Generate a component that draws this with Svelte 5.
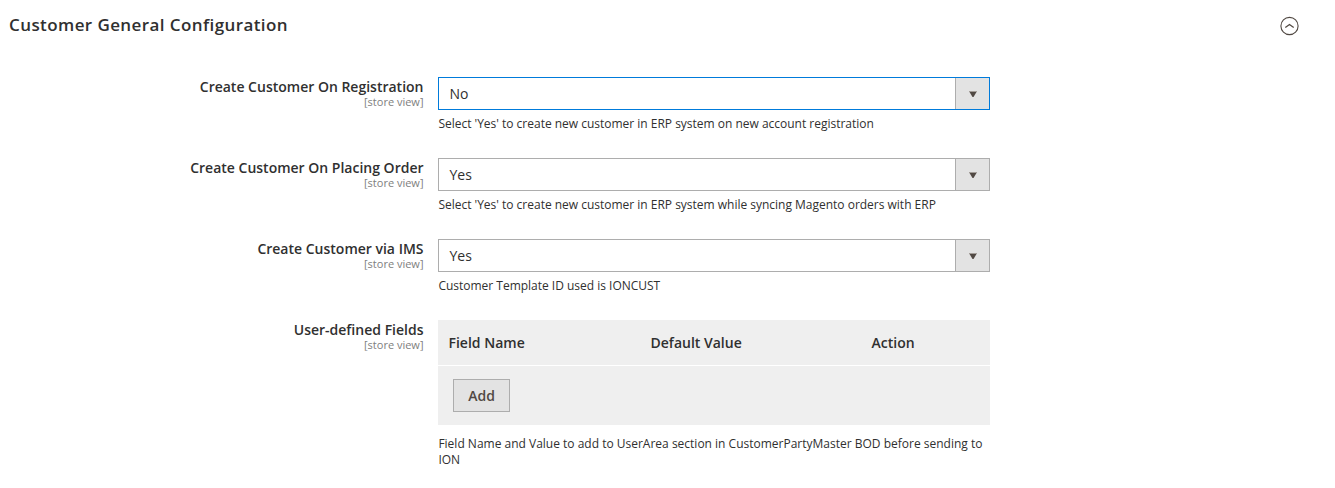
<script>
  const fields = [
    { label: 'Create Customer On Registration', value: 'No', note: "Select 'Yes' to create new customer in ERP system on new account registration", active: true },
    { label: 'Create Customer On Placing Order', value: 'Yes', note: "Select 'Yes' to create new customer in ERP system while syncing Magento orders with ERP" },
    { label: 'Create Customer via IMS', value: 'Yes', note: 'Customer Template ID used is IONCUST' }
  ];
</script>

<main>
  <header>
    <h1>Customer General Configuration</h1>
    <svg width="20" height="20" viewBox="0 0 20 20" fill="none" stroke="#514943">
      <circle cx="9.5" cy="10" r="8.6" stroke-width="1.1" />
      <path d="M5.3 11.6 9.5 8.4l4.2 3.2" stroke-width="1.2" />
    </svg>
  </header>
  {#each fields as f}
    <div class="row">
      <div class="label"><b>{f.label}</b><span>[store view]</span></div>
      <div class="control">
        <div class="select" class:active={f.active}>
          <span>{f.value}</span>
          <i><svg width="8" height="6" viewBox="0 0 8 6"><path d="M0 0h8v1H0z" fill="#a39d98" /><path d="M.5 1h7L4.5 6h-1z" fill="#514943" /></svg></i>
        </div>
        <p>{f.note}</p>
      </div>
    </div>
  {/each}
  <div class="row">
    <div class="label"><b>User-defined Fields</b><span>[store view]</span></div>
    <div class="control">
      <div class="table">
        <div class="head"><b>Field Name</b><b>Default Value</b><b>Action</b></div>
        <div class="foot"><button>Add</button></div>
      </div>
      <p>Field Name and Value to add to UserArea section in CustomerPartyMaster BOD before sending to ION</p>
    </div>
  </div>
</main>

<style>
  :global(body) { margin: 0; background: #fff; }
  main { height: 488px; overflow: hidden; font-family: "Open Sans", sans-serif; color: #303030; }
  header { display: flex; justify-content: space-between; padding: 13px 35px 0 9px; height: 64px; box-sizing: border-box; }
  h1 { margin: 0; font-size: 17px; line-height: 24px; font-weight: 600; letter-spacing: .41px; }
  header svg { margin-top: 3px; }
  .row { display: flex; padding-top: 13px; height: 81px; box-sizing: border-box; }
  .label { width: 423.5px; margin-right: 14.5px; text-align: right; flex: none; }
  .label b { display: block; font-size: 14px; line-height: 19px; font-weight: 600; }
  .label span { display: block; font-size: 11px; line-height: 12px; color: #808080; }
  .control { width: 552px; flex: none; }
  .select { display: flex; justify-content: space-between; box-sizing: border-box; height: 33px; border: 1px solid #adadad; font-size: 14px; line-height: 31px; }
  .select span { padding-left: 10.5px; }
  .select i { width: 33px; border-left: 1px solid #adadad; background: #e3e3e3; display: flex; align-items: center; justify-content: center; }
  .active { border-color: #007bdb; }
  p { margin: 6px 0 0; padding-left: .4px; font-size: 12px; line-height: 16px; letter-spacing: -.01px; }
  .table { background: #efefef; height: 105px; }
  .head { display: grid; grid-template-columns: 202px 221px 1fr; padding-left: 10.5px; height: 45px; line-height: 46px; border-bottom: 1px solid #fff; font-size: 14px; }
  .head b { font-weight: 600; }
  .foot { padding: 13px 15px; }
  button { display: block; box-sizing: border-box; width: 57px; height: 33px; border: 1px solid #adadad; background: #e3e3e3; color: #514943; padding: 0; font: 600 14px/20px "Open Sans", sans-serif; }
  .table + p { margin-top: 11px; letter-spacing: 0; }
</style>
